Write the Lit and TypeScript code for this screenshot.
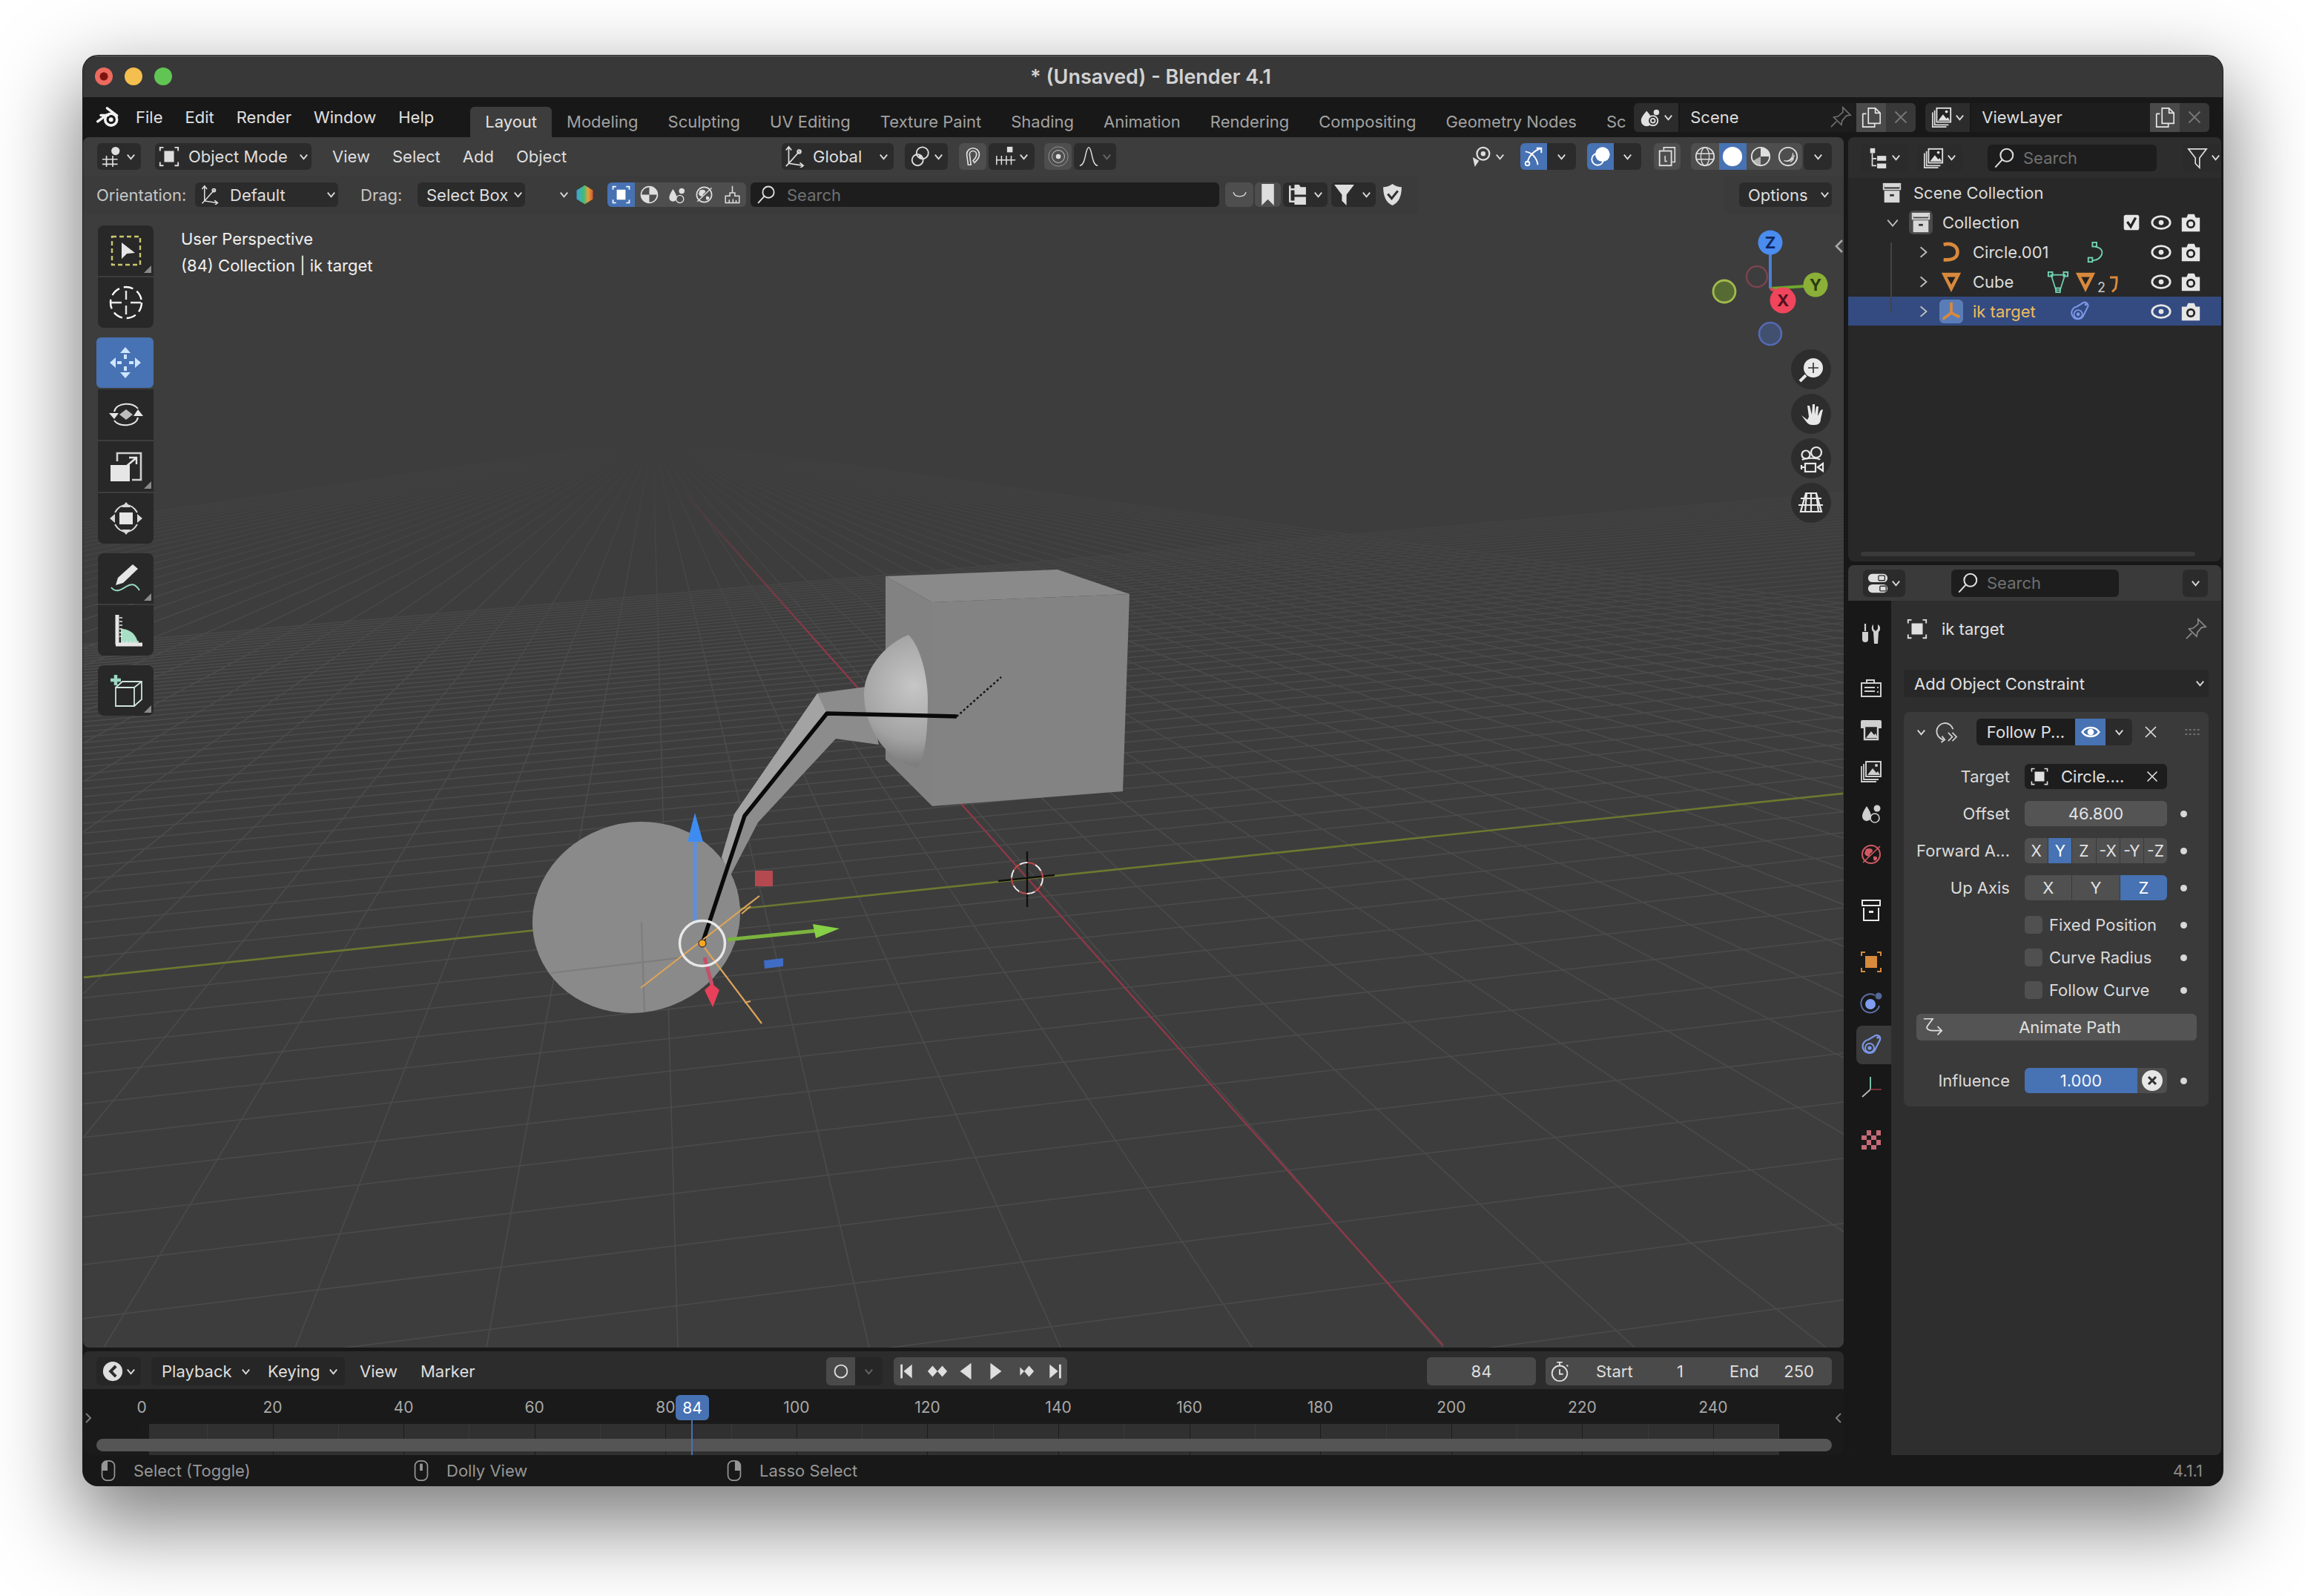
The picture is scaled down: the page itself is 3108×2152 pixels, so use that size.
import { LitElement, html, svg, css } from 'lit'
import { customElement } from 'lit/decorators.js'

const TEAL = '#72d3b4'
const ORANGE = '#d9893c'
const BLUE = '#7b97e6'

// blender style icons on a 32 unit box
const ICONS: Record<string, unknown> = {
  logo: svg`<circle cx="19.5" cy="19" r="7.5" stroke-width="3.4"/><circle cx="19.5" cy="19" r="2.8" fill="currentColor" stroke="none"/><path stroke-width="3.2" stroke-linecap="round" d="M2.5 21.5 14 13M6.5 13.5H16M14.5 4.5 27 14"/>`,
  ed3d: svg`<path stroke-width="1.8" d="M1 20h22M1 27h22M7 15v16M16 15v16"/><circle cx="20" cy="8" r="6" fill="currentColor" stroke="none"/>`,
  obj: svg`<rect x="9" y="8" width="14" height="16" fill="currentColor" stroke="none"/><path d="M3 8V3h5M24 3h5v5M29 24v5h-5M8 29H3v-5"/>`,
  orient: svg`<path stroke-width="1.8" d="M8 3v23l20 3M8 26 24 8M4 7l4-5 4 5M24 25l5 4-5 4M8 26l-4 4"/><circle cx="23" cy="9" r="2.5"/>`,
  pivot: svg`<circle cx="19" cy="11" r="8.5"/><circle cx="12" cy="21" r="8"/><circle cx="16" cy="16" r="2.4" fill="currentColor" stroke="none"/>`,
  magnet: svg`<path stroke-width="1.8" d="M9 28 7 13a9 9 0 1 1 18 0c0 6-4 9-7 12l-2-3c3-3 5-5 5-9a5 5 0 1 0-10 0l2 15z"/>`,
  snapinc: svg`<rect x="18" y="2" width="8" height="8" fill="currentColor" stroke="none"/><path stroke-width="1.6" d="M2 21h28M3 15v13M10 15v13M17 15v13M24 15v13"/>`,
  prop: svg`<circle cx="16" cy="16" r="14" stroke-width="1" opacity=".5"/><circle cx="16" cy="16" r="9" stroke-width="1.2" opacity=".7"/><circle cx="16" cy="16" r="3.5" fill="currentColor" stroke="none"/>`,
  falloff: svg`<path stroke-width="1.6" d="M3 29C12 29 11 3 16 3s4 26 13 26"/>`,
  viz: svg`<circle cx="18" cy="12" r="9" stroke-width="2.4"/><circle cx="18" cy="12" r="3.4" fill="currentColor" stroke="none"/><path d="m3 17 9 5-6 9z" fill="currentColor" stroke="none"/>`,
  gizmo: svg`<path stroke-width="2" d="M7 25C9 14 16 8 27 4M20 4h7v7M4 9c8 1 16 7 18 19"/><circle cx="7" cy="26" r="3"/>`,
  overlay: svg`<circle cx="19" cy="13" r="10.5" fill="currentColor" stroke="none"/><circle cx="12" cy="20" r="8.5" stroke-width="2"/>`,
  xray: svg`<path stroke-width="1.8" d="M11 7V3h16v21h-4"/><rect x="5" y="8" width="17" height="21" stroke-width="2"/><path stroke-width="1.6" d="M13 15v8h3"/>`,
  wire: svg`<circle cx="16" cy="16" r="13"/><ellipse cx="16" cy="16" rx="6" ry="13" stroke-width="1.4"/><path stroke-width="1.4" d="M3 12h26M3 20h26"/>`,
  sphere: svg`<circle cx="16" cy="16" r="14" fill="currentColor" stroke="none"/>`,
  mat: svg`<circle cx="16" cy="16" r="13"/><path d="M16 3a13 13 0 0 1 13 13H16z" fill="currentColor" stroke="none"/><path d="M16 16v13A13 13 0 0 1 5 22z" fill="currentColor" opacity=".7" stroke="none"/>`,
  shade: svg`<circle cx="16" cy="16" r="13"/><path stroke-width="1.4" d="M10 22c7 2 13-3 13-11M14 23c5 0 10-4 11-9M19 24c2-1 4-3 5-5"/>`,
  search: svg`<circle cx="19" cy="12" r="9" stroke-width="2.2"/><path stroke-width="2.2" d="m12.5 18.5-10 11"/>`,
  drop: svg`<path d="M11 7c4 5 8 9 8 14a8 8 0 0 1-16 0c0-5 4-9 8-14z" fill="currentColor" stroke="none"/><circle cx="25" cy="9" r="4" fill="currentColor" stroke="none"/><circle cx="20" cy="21" r="7" fill="#2b2b2b"/><circle cx="20" cy="21" r="3"/>`,
  hex: svg`<defs><linearGradient id="hexg" x1="0" x2="1" y1="0" y2="0"><stop offset="0" stop-color="#3ba6d8"/><stop offset=".45" stop-color="#44bb78"/><stop offset=".7" stop-color="#e2a23c"/><stop offset="1" stop-color="#d8582f"/></linearGradient></defs><polygon points="16,1 29,9 29,23 16,31 3,23 3,9" fill="url(#hexg)" stroke="none"/>`,
  halfdisc: svg`<circle cx="16" cy="16" r="13"/><path d="M16 3a13 13 0 0 1 13 13H16zM16 16v13A13 13 0 0 1 3 16z" fill="currentColor" stroke="none"/>`,
  drops: svg`<path d="M10 7c3 5 6 9 6 14a6 6 0 0 1-12 0c0-5 3-9 6-14z" fill="currentColor" stroke="none"/><circle cx="24" cy="10" r="4.5" fill="currentColor" stroke="none"/><circle cx="21" cy="23" r="6" stroke-width="1.6"/>`,
  world: svg`<circle cx="16" cy="16" r="12"/><path d="M9 9c4-2 9-1 9 2s-4 3-4 6-5 2-7-2zM19 19c3-1 6 0 5 3s-4 3-5 1z" fill="currentColor" stroke="none"/><path stroke-width="1.6" d="M5 27 28 5"/>`,
  brush: svg`<path stroke-width="1.8" d="M16 2v11M12 13h8v5h7v11H5V18h7zM11 29v-5M17 29v-6M22 29v-4"/>`,
  smile: svg`<path stroke-width="1.6" d="M6 12c2 9 18 9 20 0"/>`,
  bookmark: svg`<path d="M8 2h16v28l-8-8-8 8z" fill="currentColor" stroke="none"/>`,
  hier: svg`<path stroke-width="2.4" d="M8 4v22M8 9h7M8 25h7"/><path d="M14 3h6l2 3h7v10H14zM14 19h15v10H14z" fill="currentColor" stroke="none"/>`,
  funnel: svg`<path d="M3 3h26L19 16v14l-6-6v-8z" fill="currentColor" stroke="none"/>`,
  funnelo: svg`<path stroke-width="1.8" d="M3 3h26L19 16v14l-6-6v-8z"/>`,
  shield: svg`<path d="M16 2c4 3 8 4 12 4 0 11-3 20-12 24C7 26 4 17 4 6c4 0 8-1 12-4z" fill="currentColor" stroke="none"/><path stroke="#2e2e2e" stroke-width="3" d="m10 15 5 6 8-10"/>`,
  tree: svg`<rect x="5" y="2" width="7" height="7" fill="currentColor" stroke="none"/><path stroke-width="1.8" d="M8 9v18h6M8 17h6"/><rect x="15" y="13" width="13" height="7" fill="currentColor" stroke="none"/><rect x="15" y="24" width="13" height="7" fill="currentColor" stroke="none"/>`,
  toggle: svg`<rect x="2" y="3" width="28" height="12" rx="6" fill="currentColor" stroke="none"/><rect x="17" y="5.5" width="9" height="7" rx="1" fill="none" stroke="#2b2b2b" stroke-width="1.4"/><rect x="2" y="18" width="28" height="12" rx="6" fill="currentColor" stroke="none"/><rect x="19" y="20.5" width="9" height="7" rx="1" fill="none" stroke="#2b2b2b" stroke-width="1.4"/>`,
  layers: svg`<path stroke-width="1.8" d="M3 9v21h20M6 6v21h20"/><rect x="9" y="3" width="20" height="20" stroke-width="2" fill="#222"/><path d="m11 21 7-9 5 6 2-2 3 5z" fill="currentColor" stroke="none"/><circle cx="23" cy="8" r="2" fill="currentColor" stroke="none"/>`,
  copy: svg`<path stroke-width="1.8" d="M4 11h5M4 11v19h17v-5M12 3h10l7 7v15H12zM22 3v7h7"/>`,
  close: svg`<path d="m8 8 16 16M24 8 8 24"/>`,
  pin: svg`<path stroke-width="1.8" d="m19 2 11 11-6 1-6 7-1 6-11-11 6-1 7-6zM10 22l-8 8"/>`,
  coll: svg`<rect x="4" y="3" width="24" height="8" stroke-width="2"/><rect x="5" y="3" width="22" height="5" fill="currentColor" stroke="none"/><path d="M5 13h22v17H5z" fill="currentColor" stroke="none"/><rect x="13" y="18" width="6" height="3" fill="#333" stroke="none"/>`,
  collo: svg`<path stroke-width="2" d="M4 3h24v7H4zM6 13v17h20V13"/><rect x="13" y="17" width="6" height="3" fill="currentColor" stroke="none"/>`,
  check: svg`<rect x="5" y="5" width="22" height="22" rx="3" fill="currentColor" stroke="none"/><path stroke="#222" stroke-width="3.5" d="m10 15 5 7 7-13"/>`,
  eye: svg`<ellipse cx="16" cy="16" rx="13" ry="9" stroke-width="3"/><circle cx="16" cy="16" r="3.6" fill="currentColor" stroke="none"/>`,
  blink: svg`<path stroke-width="2.8" d="M3 16c6-9 20-9 26 0-6 9-20 9-26 0z"/><circle cx="16" cy="16" r="5" fill="currentColor" stroke="none"/>`,
  cam: svg`<path d="M3 9h7l2-5h9l2 5h6v20H3z" fill="currentColor" stroke="none"/><circle cx="16" cy="18" r="6.5" fill="#222" stroke="none"/><circle cx="16" cy="18" r="3.6" fill="currentColor" stroke="none"/>`,
  curve: svg`<path stroke-width="5" d="M5 5c13-3 20 3 20 11S18 28 5 27"/>`,
  curvedata: svg`<rect x="10" y="2" width="6" height="6"/><rect x="4" y="24" width="6" height="6"/><path stroke-width="2" d="M14 8c10 2 12 8 8 14s-8 5-12 6"/>`,
  meshtri: svg`<path stroke-width="1.8" d="M6 6h20L19 28h-6z"/><rect x="2" y="2" width="6" height="6"/><rect x="24" y="2" width="6" height="6"/><rect x="13" y="25" width="6" height="6"/>`,
  meshobj: svg`<path d="M2 3h28L16 31z" fill="currentColor" stroke="none"/><path d="M10 9h12l-6 11z" fill="#222" stroke="none"/>`,
  hook: svg`<path stroke-width="4" d="M8 4h12v8l-2 12-6 6"/>`,
  empty: svg`<path stroke-width="4" d="M16 3v15L4 27M16 18l12 6"/>`,
  wrench: svg`<path stroke-width="2.2" d="M8 2v10"/><path d="M4 13h8v10a4 4 0 0 1-8 0z" fill="currentColor" stroke="none"/><path d="M19 3v6l3 3 3-3V3c4 2 4 8 1 10l-1 16h-5l-1-16c-3-2-3-8 0-10z" fill="currentColor" stroke="none"/>`,
  rcam: svg`<path stroke-width="2" d="M3 9h26v18H3zM10 9V5h10v4"/><path stroke-width="1.8" d="M7 15h14M7 20h14M25 14v2M25 20v2"/>`,
  print: svg`<path d="M4 3h24a2 2 0 0 1 2 2v9H2V5a2 2 0 0 1 2-2z" fill="currentColor" stroke="none"/><path stroke-width="2.4" d="M7 11h18v18H7z" fill="#222"/><path d="m9 27 7-9 4 5 2-2 3 6z" fill="currentColor" stroke="none"/>`,
  objo: svg`<rect x="8" y="8" width="16" height="16" fill="currentColor" stroke="none"/><path stroke-width="2" d="M3 8V3h5M24 3h5v5M29 24v5h-5M8 29H3v-5"/>`,
  phys: svg`<path stroke-width="2" opacity=".65" d="M21 5a12.5 12.5 0 1 0 6 14"/><circle cx="15" cy="17" r="7" fill="currentColor" stroke="none"/><circle cx="26" cy="6" r="4.5" fill="currentColor" opacity=".6" stroke="none"/>`,
  constr: svg`<path stroke-width="2.2" d="M22 3c4-1 7 2 6 6l-7 14a9 9 0 1 1-9-14z"/><circle cx="25" cy="6" r="1.8" fill="currentColor" stroke="none"/><circle cx="14" cy="20" r="6" stroke-width="2"/><circle cx="14" cy="20" r="2.6" fill="currentColor" stroke="none"/>`,
  follow: svg`<path stroke-width="2" d="M11 27A12 12 0 1 1 25 12"/><path stroke-width="2" d="m9 22 4 5-5 4"/><path stroke-width="1.8" d="m18 17 6 6-6 6M24 17l6 6-6 6"/>`,
  path: svg`<path stroke-width="1.8" d="M3 4h13l-8 11c-2 4 4 6 8 6h12M23 15l6 6-6 6"/>`,
  clock: svg`<circle cx="16" cy="19" r="11"/><path stroke-width="2" d="M12 3h8M16 3v5M16 13v7h5M26 7l2 2"/>`,
  record: svg`<circle cx="16" cy="16" r="9" stroke-width="2"/>`,
  first: svg`<path d="M6 6v20" stroke-width="3"/><path d="M21 6v20L9 16z" fill="currentColor" stroke="none"/>`,
  prevk: svg`<path d="m9 8 7 8-7 8-7-8zM23 8l7 8-7 8-7-8z" fill="currentColor" stroke="none"/>`,
  rev: svg`<path d="M23 4v24L7 16z" fill="currentColor" stroke="none"/>`,
  play: svg`<path d="M9 4v24l16-12z" fill="currentColor" stroke="none"/>`,
  nextk: svg`<path d="m10 10 6 6-6 6zM23 8l7 8-7 8-7-8z" fill="currentColor" stroke="none"/>`,
  last: svg`<path d="M26 6v20" stroke-width="3"/><path d="M11 6v20l12-10z" fill="currentColor" stroke="none"/>`,
  timeline: svg`<circle cx="16" cy="16" r="14" fill="currentColor" stroke="none"/><path fill="#2c2c2c" stroke="none" d="m19 7-9 9 9 9 3-3-6-6 6-6z"/>`,
  mouse: svg`<rect x="7" y="2" width="18" height="28" rx="7" stroke-width="1.8"/><path d="M15 2a8 8 0 0 0-8 8v6h8z" fill="currentColor" stroke="none"/>`,
  mousem: svg`<rect x="7" y="2" width="18" height="28" rx="7" stroke-width="1.8"/><rect x="14" y="6" width="4" height="10" fill="currentColor" stroke="none"/>`,
  mouser: svg`<rect x="7" y="2" width="18" height="28" rx="7" stroke-width="1.8"/><path d="M17 2a8 8 0 0 1 8 8v6h-8z" fill="currentColor" stroke="none"/>`,
  texture: svg`<rect x="3" y="3" width="26" height="26" fill="currentColor" stroke="none"/><path fill="#1a1a1a" stroke="none" d="M3 3h7v7H3zM16 3h7v7h-7zM10 10h6v6h-6zM23 10h6v6h-6zM3 16h7v7H3zM16 16h7v7h-7zM10 23h6v6h-6zM23 23h6v6h-6z"/>`,
  axes: svg`<path stroke="#7fd3b4" stroke-width="1.8" d="M15 3v17"/><path stroke="#8a2f3a" stroke-width="1.8" d="M15 20h15"/><path stroke="#bbb" stroke-width="1.8" d="M15 20 4 30"/>`,
}

// larger tool shelf icons on a 48 unit box
const TOOLS: Record<string, unknown> = {
  select: svg`<rect x="5" y="5" width="38" height="38" stroke="#c9c66f" stroke-width="2.4" stroke-dasharray="6 4"/><path d="M18 13v22l7-7 11-1z" fill="#e6e6e6" stroke="none"/>`,
  cursor: svg`<circle cx="24" cy="24" r="21" stroke="#fff" stroke-width="2.4" stroke-dasharray="13 6"/><path stroke="#e6e6e6" stroke-width="2.4" d="M4 24h14M30 24h14M24 8v12M24 28v12"/>`,
  move: svg`<g fill="#cde6ff" stroke="none"><path d="M24 3l7 8H17zM24 45l-7-8h14zM3 24l8-7v14zM45 24l-8 7V17z"/><rect x="22" y="13" width="4" height="6"/><rect x="22" y="29" width="4" height="6"/><rect x="13" y="22" width="6" height="4"/><rect x="29" y="22" width="6" height="4"/></g>`,
  rotate: svg`<path stroke="#e6e6e6" stroke-width="2" d="M8 20C11 7 34 7 40 16M40 28C37 41 14 41 8 32"/><path fill="#e6e6e6" stroke="none" d="m1 22 13 0-6 8zM47 26H34l6-9z"/><path fill="#bdbdbd" stroke="none" d="m24 17 9 7-9 7-9-7z"/>`,
  scale: svg`<path stroke="#cfcfcf" stroke-width="2.6" d="M12 17V6h32v36H32"/><rect x="3" y="22" width="26" height="22" fill="#e6e6e6" stroke="none"/><path stroke="#e6e6e6" stroke-width="2.4" d="m24 24 13-11M28 12h10v9"/>`,
  transform: svg`<path stroke="#d8d8d8" stroke-width="2" d="M9 16C13 9 19 6 24 6M39 16C35 9 29 6 24 6M9 32c4 7 10 10 15 10M39 32c-4 7-10 10-15 10"/><rect x="15" y="16" width="18" height="16" fill="#e6e6e6" stroke="none"/><path fill="#d8d8d8" stroke="none" d="M24 2l6 7H18zM24 46l-6-7h12zM2 24l7-6v12zM46 24l-7 6V18z"/>`,
  annotate: svg`<path fill="#e6e6e6" stroke="none" d="m33 5 7 6-20 19-10 3 3-10z"/><path stroke="#9ad7c4" stroke-width="2" d="M4 36c6 8 14 3 20-1s12-5 18 5"/>`,
  measure: svg`<path d="M17 22a22 22 0 0 1 23 20H17z" fill="#a7e0c6" stroke="none"/><path stroke="#e6e6e6" stroke-width="5" d="M12 3v40M10 43h36"/><path stroke="#e6e6e6" stroke-width="1.4" d="M15 7h4M15 12h4M15 17h4M15 22h4M15 27h4M15 32h4M20 38v5M25 38v5M30 38v5M35 38v5M40 38v5"/>`,
  add: svg`<path stroke="#9ad7c4" stroke-width="4.5" d="M10 3v14M3 10h14"/><path stroke="#cfe3dc" stroke-width="1.8" d="M10 20h25v25H10zM10 20l9-8h26v24l-10 9M35 20l10-8"/>`,
}

const icon = (name: string, cls = '') =>
  html`<svg class="ic ${cls}" viewBox="0 0 32 32" fill="none" stroke="currentColor" stroke-width="2">${ICONS[name]}</svg>`

const caret = (dim = false) =>
  html`<svg class="caret ${dim ? 'dim' : ''}" viewBox="0 0 16 16" fill="none" stroke="currentColor" stroke-width="2"><path d="m3 5 5 6 5-6"/></svg>`

const dot = () => html`<span class="dotc"><i class="dot"></i></span>`

// --- viewport ground plane ---
const VX = { x: 880, y: 590 }
const VY = { x: 25000, y: -1285 }
const ORIGIN = { x: 1385, y: 1184 }
const V_LEFT = 112
const V_RIGHT = 2486

function gridLines() {
  const out: { x1: number; y1: number; x2: number; y2: number }[] = []
  for (let k = -36; k <= 30; k++) {
    out.push({ x1: VX.x, y1: VX.y, x2: 1946 + 258 * k, y2: 1817 })
  }
  const a = 0.04
  for (let u = -15; u <= 50; u++) {
    const t = a * u
    const px = (t * VX.x + ORIGIN.x) / (t + 1)
    const py = (t * VX.y + ORIGIN.y) / (t + 1)
    const slope = (VY.y - py) / (VY.x - px)
    out.push({ x1: V_LEFT, y1: py + (V_LEFT - px) * slope, x2: V_RIGHT, y2: py + (V_RIGHT - px) * slope })
  }
  return out
}

const scene = () => svg`
  <defs>
    <linearGradient id="gridFade" gradientUnits="userSpaceOnUse" x1="0" x2="0" y1="590" y2="900">
      <stop offset="0" stop-color="#3d3d3d"/><stop offset="1" stop-color="#4b4b4b"/>
    </linearGradient>
    <linearGradient id="redFade" gradientUnits="userSpaceOnUse" x1="0" x2="0" y1="650" y2="860">
      <stop offset="0" stop-color="#3d3d3d"/><stop offset="1" stop-color="#8c3848"/>
    </linearGradient>
    <radialGradient id="dome" gradientUnits="userSpaceOnUse" cx="1232" cy="925" r="105">
      <stop offset="0" stop-color="#c6c6c6"/><stop offset=".7" stop-color="#a2a2a2"/><stop offset="1" stop-color="#7e7e7e"/>
    </radialGradient>
  </defs>
  ${gridLines().map(l => svg`<line x1=${l.x1} y1=${l.y1} x2=${l.x2} y2=${l.y2} stroke="url(#gridFade)" stroke-width="1.5"/>`)}
  <line x1="922" y1="664" x2="1946" y2="1814" stroke="url(#redFade)" stroke-width="2.4"/>
  <line x1="113" y1="1318" x2="2485" y2="1070" stroke="#6e7a2c" stroke-width="2.4"/>

  <polygon points="1194,777 1257,812 1257,1087 1194,1024" fill="#828282"/>
  <polygon points="1194,777 1426,768 1523,801 1257,812" fill="#8a8a8a"/>
  <polygon points="1257,812 1523,801 1514,1067 1257,1087" fill="#838383"/>

  <polygon points="973,1156 990,1098 1102,935 1168,926 1185,1004 1127,996 1022,1109 984,1182" fill="#8c8c8c"/>
  <polygon points="973,1156 990,1098 1102,935 1115,962 1004,1100 982,1176" fill="#a3a3a3"/>
  <path d="M1225 856C1190 870 1165 905 1165 935c0 50 35 95 72 100 11-15 14-50 14-91 0-34-11-74-26-88z" fill="url(#dome)"/>

  <ellipse cx="858" cy="1237" rx="141" ry="128" transform="rotate(-16 858 1237)" fill="#8a8a8a"/>
  <path d="M865 1243 869 1364M743 1312 921 1291" stroke="#7c7c7c" stroke-width="2" fill="none"/>

  <path d="M947 1272 1004 1100 1115 962 1290 966" stroke="#0a0a0a" stroke-width="5.5" fill="none" stroke-linejoin="round"/>
  <path d="M1290 966 1350 913" stroke="#111" stroke-width="2.4" stroke-dasharray="3 3" fill="none"/>

  <path d="M864 1332 1024 1208M1012 1222 1000 1232M950 1278 1027 1380M1004 1352 1012 1350" stroke="#dba35a" stroke-width="2.2" fill="none"/>
  <path d="M937 1243V1130" stroke="#5d8fe0" stroke-width="5" fill="none"/>
  <polygon points="937,1096 948,1135 927,1135" fill="#3f8cf0"/>
  <path d="M981 1267 1100 1255" stroke="#7ab33e" stroke-width="5" fill="none"/>
  <polygon points="1132,1252 1096,1246 1100,1265" fill="#86d045"/>
  <path d="M950 1291 960 1328" stroke="#c5506a" stroke-width="5" fill="none"/>
  <polygon points="961,1358 950,1335 960,1326 970,1335" fill="#e8405a"/>
  <rect x="1018" y="1174" width="24" height="21" fill="#b44a50"/>
  <polygon points="1030,1295 1056,1292 1056,1303 1031,1306" fill="#3f6cc4"/>
  <circle cx="947" cy="1272" r="30.5" fill="none" stroke="#e8e8e8" stroke-width="3.4"/>
  <circle cx="947" cy="1272" r="5" fill="#f5a623" stroke="#111" stroke-width="1"/>

  <path d="M1346 1188 1422 1180M1385 1148 1385 1223" stroke="#111" stroke-width="2.4" fill="none"/>
  <circle cx="1385" cy="1184" r="21" fill="none" stroke="#eee" stroke-width="2" stroke-dasharray="11 11"/>
  <circle cx="1385" cy="1184" r="21" fill="none" stroke="#c24a4a" stroke-width="2" stroke-dasharray="11 11" stroke-dashoffset="11"/>

  <path d="M2387 389V343" stroke="#4c7fd6" stroke-width="4"/>
  <path d="M2387 389 2432 386" stroke="#6ea62e" stroke-width="4"/>
  <path d="M2387 389 2398 395" stroke="#e0455a" stroke-width="4"/>
  <circle cx="2369" cy="373" r="14" fill="none" stroke="#7a4350" stroke-width="2.6"/>
  <circle cx="2325" cy="393" r="15" fill="#566b34" stroke="#a4bb4a" stroke-width="2.8"/>
  <circle cx="2387" cy="450" r="15" fill="#41506e" stroke="#5569b5" stroke-width="2.6"/>
  <circle cx="2387" cy="327" r="16.5" fill="#4a8cf0"/>
  <circle cx="2448" cy="384" r="16.5" fill="#8ab038"/>
  <circle cx="2404" cy="405" r="17.5" fill="#f0455c"/>
  <g class="axis">
    <text x="2387" y="335" fill="#10295e">Z</text>
    <text x="2448" y="392" fill="#2a3a0c">Y</text>
    <text x="2404" y="413" fill="#52101c">X</text>
  </g>
  <path d="m2484 324-8 8 8 8" stroke="#a8a8a8" stroke-width="2.6" fill="none"/>

  <g fill="#2d2d2d"><circle cx="2442" cy="498" r="27"/><circle cx="2442" cy="558" r="27"/><circle cx="2442" cy="618" r="27"/><circle cx="2442" cy="678" r="27"/></g>
  <circle cx="2445" cy="496" r="13" fill="#e8e8e8"/>
  <path d="M2435 506 2427 514" stroke="#e8e8e8" stroke-width="4"/>
  <path d="M2445 489v14M2438 496h14" stroke="#2d2d2d" stroke-width="1.6"/>
  <path d="M2429 560l6 8c2 3 5 5 9 5h3c5 0 8-3 8-8l3-13-3 1-4 8 1-13h-3l-2 11v-14h-3l-1 14-3-12h-3l2 15-2 4z" fill="#e8e8e8"/>
  <g fill="none" stroke="#e8e8e8" stroke-width="2.2">
    <circle cx="2435" cy="613" r="5.5"/><circle cx="2449" cy="610" r="7"/>
    <path d="M2430 620c4-3 22-3 24 0"/>
    <rect x="2434" y="625" width="14" height="11"/><path d="M2434 630h-5M2429 627v6M2458 625v10l-7-5z"/>
  </g>
  <path d="M2435 665h14l7 25h-28zM2428 672h28M2425 681h33M2442 665v25M2436 665l-2 25M2449 665l3 25" fill="none" stroke="#e8e8e8" stroke-width="2.2"/>
`

const TAB_ICONS: { icon: string; color: string; gap?: string; active?: boolean }[] = [
  { icon: 'wrench', color: '#cfcfcf' },
  { icon: 'rcam', color: '#cfcfcf', gap: 'g1' },
  { icon: 'print', color: '#cfcfcf' },
  { icon: 'layers', color: '#cfcfcf' },
  { icon: 'drops', color: '#cfcfcf' },
  { icon: 'world', color: '#cf5a62' },
  { icon: 'collo', color: '#e8e8e8', gap: 'g2' },
  { icon: 'objo', color: ORANGE, gap: 'g3' },
  { icon: 'phys', color: '#7f9cf0' },
  { icon: 'constr', color: BLUE, active: true },
  { icon: 'axes', color: '#cfcfcf' },
  { icon: 'texture', color: '#c66a78', gap: 'g4' },
]

type Row = { name: string; icon: string; color: string; indent: number; chev?: string; nameW?: number; boxed?: string; sel?: boolean; check?: boolean; extras?: unknown; cam?: boolean }

const ROWS: Row[] = [
  { name: 'Scene Collection', icon: 'coll', color: '#d8d8d8', indent: 43, cam: false },
  { name: 'Collection', icon: 'coll', color: '#d8d8d8', indent: 38, chev: 'down', boxed: 'box', check: true, cam: true },
  { name: 'Circle.001', icon: 'curve', color: ORANGE, indent: 79, chev: 'right', nameW: 152, cam: true,
    extras: html`<span class="tint" style="color:${TEAL}">${icon('curvedata')}</span>` },
  { name: 'Cube', icon: 'meshobj', color: ORANGE, indent: 79, chev: 'right', nameW: 100, cam: true,
    extras: html`<span class="tint mr6" style="color:${TEAL}">${icon('meshtri')}</span><span class="tint" style="color:${ORANGE}">${icon('meshobj')}</span><span class="sub">2</span><span class="tint hook" style="color:${ORANGE}">${icon('hook')}</span>` },
  { name: 'ik target', icon: 'empty', color: ORANGE, indent: 79, chev: 'right', nameW: 129, boxed: 'box act', sel: true, cam: true,
    extras: html`<span class="tint" style="color:${BLUE}">${icon('constr')}</span>` },
]

const RULER = [0, 20, 40, 60, 80, 100, 120, 140, 160, 180, 200, 220, 240]
const frameX = (f: number) => 79 + f * 8.829

@customElement('app-root')
export class AppRoot extends LitElement {
  static styles = css`
    :host {
      display: block;
      width: 3108px;
      height: 2152px;
      box-sizing: border-box;
      padding: 75px 111px 149px 112px;
      background: #fff;
      font-family: Inter, "Noto Sans", sans-serif;
      font-size: 22px;
      color: #e0e0e0;
      overflow: hidden;
    }
    * { box-sizing: border-box; }
    i { display: block; }

    .window {
      width: 2885px;
      height: 1928px;
      display: flex;
      flex-direction: column;
      background: #181818;
      border-radius: 20px;
      overflow: hidden;
      box-shadow: 0 0 0 1px #1c1c1c, 0 44px 110px 10px rgba(0, 0, 0, .5);
    }

    /* title bar */
    .titlebar {
      height: 56px;
      flex: none;
      position: relative;
      display: flex;
      align-items: center;
      justify-content: center;
      background: #383838;
      border-top: 1px solid #6a6a6a;
      padding-right: 6px;
      font-size: 27px;
      font-weight: 600;
      color: #d2d2d2;
    }
    .lights {
      position: absolute;
      left: 16px;
      top: 15px;
      display: flex;
      gap: 16px;
    }
    .lights i { width: 24px; height: 24px; border-radius: 50%; }
    .lights .r { background: radial-gradient(circle, #7c1510 0 5px, #ee6a5e 6px); }
    .lights .y { background: #f5bf4f; }
    .lights .g { background: #61c554; }

    /* top bar */
    .topbar {
      height: 54px;
      flex: none;
      display: flex;
      align-items: center;
      padding-left: 17px;
      background: #181818;
      font-size: 22px;
    }
    .topbar .logo { color: #f0f0f0; margin-right: 20px; }
    .topbar .logo .ic { width: 34px; height: 34px; }
    .menus { display: flex; gap: 30px; }
    .tabs {
      width: 1558px;
      height: 41px;
      margin-left: 49px;
      align-self: flex-end;
      display: flex;
      overflow: hidden;
      flex: none;
    }
    .tab {
      padding: 0 20px 2px;
      flex: none;
      display: flex;
      align-items: center;
      color: #a2a2a2;
      border-radius: 6px 6px 0 0;
      white-space: nowrap;
    }
    .tab:last-child { padding-right: 0; }
    .tab.on { background: #3d3d3d; color: #e2e2e2; }
    .idpick {
      height: 39px;
      flex: none;
      display: flex;
      align-items: center;
      background: #2c2c2c;
      border-radius: 6px;
      overflow: hidden;
      color: #e0e0e0;
    }
    .idpick.scene { width: 380px; margin-left: 11px; }
    .idpick.vl { width: 383px; margin-left: 13px; }
    .idpick .drop { width: 62px; display: flex; align-items: center; justify-content: center; border-right: 2px solid #181818; height: 100%; flex: none; }
    .idpick .nm { flex: 1; height: 100%; padding-left: 14px; display: flex; align-items: center; justify-content: space-between; background: #1d1d1d; color: #dedede; }
    .idpick .nm .pin { color: #6e6e6e; margin-right: 6px; }
    .idpick .ab { width: 40px; height: 100%; flex: none; display: flex; align-items: center; justify-content: center; background: #4a4a4a; color: #e6e6e6; }
    .idpick .ab.x { background: #383838; color: #777; }

    /* work area */
    .work {
      flex: 1;
      min-height: 0;
      display: grid;
      grid-template-columns: 2374px 503px;
      column-gap: 6px;
    }
    .left, .right { display: flex; flex-direction: column; gap: 5px; min-height: 0; min-width: 0; }

    /* viewport */
    .viewport {
      height: 1632px;
      flex: none;
      position: relative;
      background: #3d3d3d;
      border-radius: 8px;
      overflow: hidden;
    }
    .viewport .scene { position: absolute; inset: 0; width: 100%; height: 100%; }
    .scene .axis text { font: 700 22px Inter, sans-serif; text-anchor: middle; }
    .vhead {
      position: relative;
      height: 52px;
      display: grid;
      grid-template-columns: 923px 924px auto;
      align-items: center;
      padding-left: 19px;
    }
    .cluster { display: flex; align-items: center; height: 36px; }
    .ctl {
      height: 100%;
      display: flex;
      align-items: center;
      justify-content: center;
      flex: none;
      background: #2b2b2b;
      color: #dedede;
      border-radius: 6px;
      white-space: nowrap;
    }
    .ctl.tog { background: #4e4e4e; }
    .ctl.on { background: #4772b3; color: #fff; }
    .ctl.bare { background: transparent; }
    .ctl.ln { border-radius: 6px 0 0 6px; }
    .ctl.rn { border-radius: 0 6px 6px 0; }
    .ctl.mn { border-radius: 0; }
    .ic { width: 30px; height: 30px; display: block; flex: none; }
    .ic + .caret { margin-left: 2px; }
    .caret { width: 15px; height: 15px; display: block; flex: none; color: #dcdcdc; }
    .caret.dim { color: #666; }
    .textm { color: #dedede; }
    .mvw { display: flex; gap: 30px; margin-left: 28px; }
    .w59 { width: 59px; } .w57 { width: 57px; } .w58 { width: 58px; } .w62 { width: 62px; }
    .w37 { width: 37px; } .w39 { width: 39px; } .w38 { width: 38px; } .w36 { width: 36px; }
    .ml15 { margin-left: 15px; } .ml19 { margin-left: 19px; } .ml3 { margin-left: 3px; } .ml13 { margin-left: 13px; } .ml17 { margin-left: 17px; } .ml14 { margin-left: 14px; } .ml2 { margin-left: 2px; }
    .om { width: 211px; justify-content: flex-start; padding-left: 4px; }
    .om .lb { flex: 1; margin-left: 11px; }
    .om .caret { margin-right: 3px; }
    .global { width: 151px; justify-content: flex-start; padding-left: 2px; }
    .global .lb { flex: 1; margin-left: 10px; }
    .global .caret { margin-right: 6px; }
    .shade .ctl { width: 37.5px; }

    .tools {
      position: relative;
      height: 52px;
      display: flex;
      justify-content: space-between;
    }
    .tleft {
      width: 1800px;
      height: 52px;
      padding: 9px 0 10px 18px;
      background: #3b3b3b;
      display: grid;
      grid-template-columns: 133px 193px 30px 77px 145px 37px 30px 32px 12px 187px 6px 632px 8px 38px 2px 35px 3px 60px 5px 60px 5px 35px;
      align-items: center;
      border-radius: 0 0 6px 0;
    }
    .tright {
      width: 161px;
      height: 52px;
      padding: 9px 16px 10px 20px;
      background: #3b3b3b;
      border-radius: 0 0 0 6px;
    }
    .tleft .ctl, .tright .ctl { height: 33px; }
    .tleft .ic { width: 27px; height: 27px; }
    .tleft .tall .ic { width: 33px; height: 33px; }
    .tleft .tall .ic + .caret { margin: 0 4px 0 6px; }
    .lbl { color: #c6c6c6; white-space: nowrap; }
    .def { justify-content: flex-start; padding-left: 6px; }
    .def .lb { flex: 1; margin-left: 14px; text-align: left; }
    .def .caret { margin-right: 2px; }
    .sbx { justify-content: flex-start; padding-left: 12px; }
    .sbx .lb { flex: 1; }
    .sbx .caret { margin-right: 2px; }
    .modes { display: grid; grid-template-columns: repeat(5, 1fr); height: 33px; }
    .modes .ctl { width: auto; }
    .field {
      height: 100%;
      display: flex;
      align-items: center;
      background: #1d1d1d;
      color: #707070;
      border-radius: 6px;
      padding-left: 8px;
    }
    .field .ic { margin-right: 10px; color: #dedede; }
    .tleft .field .ic { margin-right: 14px; }
    .opt { width: 100%; justify-content: space-between; padding: 0 2px 0 12px; background: #2b2b2b; }

    .shelf {
      position: absolute;
      left: 20px;
      top: 119px;
      display: flex;
      flex-direction: column;
      gap: 13px;
    }
    .sgroup { display: flex; flex-direction: column; gap: 2px; }
    .tool {
      width: 75px;
      height: 68px;
      position: relative;
      display: flex;
      align-items: center;
      justify-content: center;
      background: #282828;
    }
    .sgroup .tool:first-child { border-radius: 8px 8px 0 0; }
    .sgroup .tool:last-child { border-radius: 0 0 8px 8px; }
    .sgroup .tool:only-child { border-radius: 8px; }
    .tool.on { background: #4772b3; width: 77px; margin-left: -2px; }
    .sgroup .tool.on:first-child { border-radius: 6px; }
    .tool svg { width: 48px; height: 48px; }
    .tool.more::after {
      content: '';
      position: absolute;
      right: 3px;
      bottom: 4px;
      border-left: 10px solid transparent;
      border-bottom: 10px solid #8a8a8a;
    }
    .hud {
      position: absolute;
      left: 132px;
      top: 119px;
      line-height: 36px;
      color: #f0f0f0;
    }

    /* timeline */
    .timeline {
      flex: 1;
      position: relative;
      display: flex;
      flex-direction: column;
      border-radius: 8px;
      overflow: hidden;
      background: #1a1a1a;
    }
    .thead {
      height: 51px;
      flex: none;
      padding: 8px 0 0 18px;
      display: grid;
      grid-template-columns: 984px 810px auto;
      background: #2c2c2c;
    }
    .thead .cluster { height: 38px; }
    .thead .ctl { background: #262626; }
    .thead .tog { background: #4a4a4a; }
    .thead .ic { width: 30px; height: 30px; margin: 0; }
    .w60 { width: 60px; }
    .pb { width: 143px; justify-content: space-between; padding: 0 8px 0 14px; }
    .ky { width: 118px; justify-content: space-between; padding: 0 8px 0 14px; }
    .tv { margin-left: 20px; display: flex; gap: 31px; }
    .frame { width: 147px; }
    .range { justify-content: space-between; }
    .w178 { width: 178px; padding: 0 30px 0 30px; }
    .w170 { width: 170px; padding: 0 24px 0 32px; }
    .ruler { height: 47px; flex: none; position: relative; }
    .rnum {
      position: absolute;
      top: 12px;
      transform: translateX(-50%);
      color: #a8a8a8;
      font-size: 21px;
    }
    .handle {
      position: absolute;
      left: 799px;
      top: 8px;
      width: 45px;
      height: 34px;
      display: flex;
      align-items: center;
      justify-content: center;
      background: #4772b3;
      border-radius: 6px;
      color: #fff;
      font-size: 21px;
    }
    .rarrow { position: absolute; top: 31px; width: 8px; height: 16px; color: #7a7a7a; }
    .rarrow.a { left: 3px; }
    .rarrow.b { right: 3px; }
    .track { flex: 1; position: relative; }
    .band { position: absolute; left: 89px; width: 2198px; top: 0; bottom: 0; background: #303030; }
    .tick { position: absolute; top: 0; bottom: 0; width: 1px; background: #1c1c1c; }
    .tick.minor { background: #3a3a3a; bottom: 20px; }
    .playline { position: absolute; left: 820px; top: -5px; bottom: 0; width: 2px; background: #4772b3; z-index: 2; }
    .sbar { position: absolute; left: 18px; right: 16px; top: 20px; height: 17px; background: #555; border-radius: 9px; }

    /* outliner */
    .outliner {
      height: 572px;
      flex: none;
      display: flex;
      flex-direction: column;
      position: relative;
      background: #282828;
      border-radius: 8px;
      overflow: hidden;
    }
    .ohead {
      height: 55px;
      flex: none;
      display: flex;
      align-items: center;
      padding-left: 17px;
      background: #2d2d2d;
    }
    .ohead .cluster { height: 36px; }
    .w63 { width: 63px; } .w61 { width: 61px; }
    .osearch { width: 228px; margin-left: 34px; background: #1d1d1d; flex: none; }
    .ofilter { margin-left: 34px; width: 70px; flex: none; justify-content: flex-start; padding-left: 6px; }
    .orow { height: 40px; display: flex; align-items: center; position: relative; color: #dcdcdc; }
    .orow.sel { background: #334b80; height: 39px; }
    .orow .chev { width: 44px; flex: none; display: flex; justify-content: center; color: #c0c0c0; }
    .orow .chev svg { width: 18px; height: 18px; }
    .orow .oi { width: 32px; height: 32px; flex: none; margin-right: 13px; display: flex; align-items: center; justify-content: center; border-radius: 6px; }
    .orow .oi .ic { width: 30px; height: 30px; }
    .oi.box { background: #4a4a4a; }
    .oi.act { background: #5a7db8; }
    .oname { white-space: nowrap; flex: none; }
    .orow.sel .oname { color: #f0bc5e; }
    .extras { display: flex; align-items: flex-end; flex: none; position: relative; }
    .tint .ic { width: 30px; height: 30px; }
    .mr6 { margin-right: 7px; }
    .sub { font-size: 18px; color: #c8c8c8; margin: 0 0 -3px 1px; }
    .hook .ic { width: 24px; height: 24px; }
    .ovis { position: absolute; right: 21px; top: 0; bottom: 0; display: flex; align-items: center; }
    .ovis span { width: 40px; display: flex; justify-content: center; color: #e6e6e6; }
    .ovis .ic { width: 30px; height: 30px; }
    .tline { position: absolute; left: 57px; top: 142px; height: 95px; width: 2px; background: #444; }
    .oscroll { margin: auto 35px 7px 17px; height: 6px; border-radius: 3px; background: #3a3a3a; }

    /* properties */
    .props {
      flex: 1;
      min-height: 0;
      display: flex;
      flex-direction: column;
      border-radius: 8px;
      overflow: hidden;
      background: #2e2e2e;
    }
    .phead {
      height: 48px;
      flex: none;
      display: flex;
      align-items: center;
      padding-left: 20px;
      background: #3a3a3a;
    }
    .phead .cluster { height: 37px; }
    .psearch { width: 226px; margin-left: 62px; flex: none; }
    .pdrop { width: 34px; margin-left: 86px; }
    .pbody { flex: 1; min-height: 0; display: flex; }
    .ptabs { width: 58px; flex: none; background: #181818; padding: 17px 0 0 3px; position: relative; }
    .ptab { height: 56px; display: flex; align-items: center; justify-content: center; }
    .ptab .ic { width: 32px; height: 32px; }
    .ptab.on { background: #3a3a3a; margin-left: 8px; padding-right: 8px; border-radius: 8px 0 0 8px; height: 52px; margin-top: 2px; margin-bottom: 2px; }
    .g1 { margin-top: 17px; }
    .g2 { margin-top: 19px; }
    .g3 { margin-top: 14px; }
    .g4 { margin-top: 16px; }
    .pmain { flex: 1; padding: 0 17px 0 17px; min-width: 0; }
    .pctx { height: 76px; display: flex; align-items: center; padding-left: 3px; }
    .pctx > .ic { width: 30px; height: 30px; margin-right: 18px; }
    .pctx .nm { flex: 1; }
    .pctx .pin { color: #8a8a8a; margin: 0 2px 0 0; }
    .addc {
      height: 37px;
      margin-top: 17px;
      width: 411px;
      display: flex;
      align-items: center;
      justify-content: space-between;
      padding: 0 4px 0 14px;
      background: #282828;
      border-radius: 4px;
    }
    .panel {
      margin-top: 20px;
      width: 411px;
      padding-bottom: 18px;
      background: #3a3a3a;
      border-radius: 8px;
    }
    .phd { height: 54px; display: flex; align-items: center; padding-left: 16px; }
    .phd .ic { width: 28px; height: 28px; }
    .phd .follow { margin-left: 12px; color: #d0d0d0; }
    .phd .follow .ic { width: 30px; height: 30px; }
    .fname { display: flex; height: 36px; margin-left: 25px; border-radius: 6px; overflow: hidden; flex: none; }
    .fname span { display: flex; align-items: center; justify-content: center; }
    .fname .t { width: 133px; background: #1d1d1d; }
    .fname .e { width: 41px; background: #4772b3; color: #fff; }
    .fname .c { width: 36px; background: #2b2b2b; }
    .phd .xx { margin-left: 11px; color: #dedede; }
    .grip { width: 22px; height: 12px; margin-left: 31px; background: radial-gradient(circle, #777 1.2px, transparent 1.6px) 0 0 / 5.5px 6px; }
    .prow {
      display: grid;
      grid-template-columns: 143px 192px 44px;
      column-gap: 20px;
      height: 34px;
      align-items: center;
      margin-top: 16px;
    }
    .prow > .dotc { margin-left: -20px; }
    .prow > .l { text-align: right; white-space: nowrap; color: #dadada; }
    .prow.chk { margin-top: 10px; column-gap: 0; grid-template-columns: 163px 192px 44px; }
    .prow.chk > .dotc { margin-left: 0; }
    .prow.chk.first { margin-top: 16px; }
    .tfield { height: 34px; display: flex; align-items: center; background: #1d1d1d; border-radius: 6px; padding: 0 7px 0 7px; }
    .tfield .nm { flex: 1; margin-left: 16px; }
    .tfield .ic { width: 26px; height: 26px; }
    .num { height: 34px; display: flex; align-items: center; justify-content: center; background: #545454; border-radius: 6px; color: #e2e2e2; }
    .seg { display: flex; height: 34px; gap: 1px; border-radius: 6px; overflow: hidden; }
    .seg span { flex: 1; display: flex; align-items: center; justify-content: center; background: #505050; color: #e2e2e2; }
    .seg span.on { background: #4772b3; color: #fff; }
    .seg.six span { font-size: 21px; }
    .chkrow { display: flex; align-items: center; color: #dadada; white-space: nowrap; }
    .chkb { width: 24px; height: 24px; margin-right: 9px; background: #505050; border-radius: 5px; flex: none; }
    .dotc { display: flex; justify-content: center; width: 44px; }
    .dot { width: 9px; height: 9px; border-radius: 50%; background: #d8d8d8; }
    .anim {
      width: 378px;
      height: 36px;
      margin: 15px 0 0 17px;
      padding-left: 36px;
      position: relative;
      display: flex;
      align-items: center;
      justify-content: center;
      background: #545454;
      border-radius: 6px;
    }
    .anim .ic { position: absolute; left: 7px; top: 3px; }
    .prow.infl { margin-top: 37px; }
    .slide { display: flex; height: 34px; border-radius: 6px; overflow: hidden; }
    .slide .b { flex: 1; display: flex; align-items: center; justify-content: center; background: #4772b3; color: #f0f4ff; }
    .slide .xb { width: 40px; display: flex; align-items: center; justify-content: center; background: #4e4e4e; }
    .xcirc { width: 28px; height: 28px; border-radius: 50%; background: #e6e6e6; color: #333; display: flex; align-items: center; justify-content: center; }
    .xcirc svg { width: 20px; height: 20px; }

    /* status bar */
    .status {
      height: 41px;
      flex: none;
      display: flex;
      align-items: center;
      padding: 0 27px 0 19px;
      color: #969696;
      font-size: 22px;
    }
    .sitem { width: 422px; display: flex; align-items: center; gap: 19px; }
    .sitem .ic { width: 30px; height: 30px; }
    .ver { margin-left: auto; color: #888; }
  `

  private renderViewport() {
    return html`
      <div class="viewport">
        <svg class="scene" viewBox="112 185 2374 1632" preserveAspectRatio="none">${scene()}</svg>
        <div class="vhead">
          <div class="cluster">
            <div class="ctl w59">${icon('ed3d')}${caret()}</div>
            <div class="ctl om ml19">${icon('obj')}<span class="lb">Object Mode</span>${caret()}</div>
            <div class="mvw textm"><span>View</span><span>Select</span><span>Add</span><span>Object</span></div>
          </div>
          <div class="cluster">
            <div class="ctl global">${icon('orient')}<span class="lb">Global</span>${caret()}</div>
            <div class="ctl w58 ml15">${icon('pivot')}${caret()}</div>
            <div class="ctl tog w37 ml15">${icon('magnet')}</div>
            <div class="ctl w62 ml3">${icon('snapinc')}${caret()}</div>
            <div class="ctl tog w37 ml13">${icon('prop')}</div>
            <div class="ctl w57 ml3">${icon('falloff')}${caret(true)}</div>
          </div>
          <div class="cluster">
            <div class="ctl bare w57">${icon('viz')}${caret()}</div>
            <div class="ctl on w36 ml15 ln">${icon('gizmo')}</div>
            <div class="ctl w39 rn">${caret()}</div>
            <div class="ctl on w36 ml15 ln">${icon('overlay')}</div>
            <div class="ctl w37 rn">${caret()}</div>
            <div class="ctl tog w36 ml17">${icon('xray')}</div>
            <div class="cluster shade ml14">
              <div class="ctl tog ln">${icon('wire')}</div>
              <div class="ctl on mn">${icon('sphere')}</div>
              <div class="ctl tog mn">${icon('mat')}</div>
              <div class="ctl tog rn">${icon('shade')}</div>
            </div>
            <div class="ctl w38 ml2">${caret()}</div>
          </div>
        </div>
        <div class="tools">
          <div class="tleft">
            <span class="lbl">Orientation:</span>
            <div class="ctl def">${icon('orient')}<span class="lb">Default</span>${caret()}</div>
            <i></i>
            <span class="lbl">Drag:</span>
            <div class="ctl sbx"><span class="lb">Select Box</span>${caret()}</div>
            <i></i>
            <div class="ctl bare">${caret()}</div>
            ${icon('hex')}
            <i></i>
            <div class="modes">
              <div class="ctl on ln">${icon('obj')}</div>
              <div class="ctl tog mn">${icon('halfdisc')}</div>
              <div class="ctl tog mn">${icon('drops')}</div>
              <div class="ctl tog mn">${icon('world')}</div>
              <div class="ctl tog rn">${icon('brush')}</div>
            </div>
            <i></i>
            <div class="field">${icon('search')}Search</div>
            <i></i>
            <div class="ctl tog">${icon('smile')}</div>
            <i></i>
            <div class="ctl tog tall">${icon('bookmark')}</div>
            <i></i>
            <div class="ctl tall">${icon('hier')}${caret()}</div>
            <i></i>
            <div class="ctl tall">${icon('funnel')}${caret()}</div>
            <i></i>
            <div class="ctl bare tall">${icon('shield')}</div>
          </div>
          <div class="tright"><div class="ctl opt"><span>Options</span>${caret()}</div></div>
        </div>
        <div class="shelf">
          <div class="sgroup">
            ${this.tool('select', true)}${this.tool('cursor')}
          </div>
          <div class="sgroup">
            ${this.tool('move', false, true)}${this.tool('rotate')}${this.tool('scale', true)}${this.tool('transform')}
          </div>
          <div class="sgroup">
            ${this.tool('annotate', true)}${this.tool('measure')}
          </div>
          <div class="sgroup">${this.tool('add', true)}</div>
        </div>
        <div class="hud">User Perspective<br />(84) Collection | ik target</div>
      </div>
    `
  }

  private tool(name: string, more = false, on = false) {
    return html`<div class="tool ${more ? 'more' : ''} ${on ? 'on' : ''}"><svg viewBox="0 0 48 48" fill="none">${TOOLS[name]}</svg></div>`
  }

  private renderTimeline() {
    const ticks: number[] = []
    for (let f = 0; f <= 250; f += 10) ticks.push(f)
    return html`
      <div class="timeline">
        <div class="thead">
          <div class="cluster">
            <div class="ctl w60">${icon('timeline')}${caret()}</div>
            <div class="ctl pb ml14 ln"><span>Playback</span>${caret()}</div>
            <div class="ctl ky rn"><span>Keying</span>${caret()}</div>
            <div class="tv textm"><span>View</span><span>Marker</span></div>
          </div>
          <div class="cluster">
            <div class="ctl tog w39 ln">${icon('record')}</div>
            <div class="ctl w37 rn">${caret(true)}</div>
            <div class="ctl tog w39 ml15 ln">${icon('first')}</div>
            <div class="ctl tog w39 mn">${icon('prevk')}</div>
            <div class="ctl tog w39 mn">${icon('rev')}</div>
            <div class="ctl tog w39 mn">${icon('play')}</div>
            <div class="ctl tog w39 mn">${icon('nextk')}</div>
            <div class="ctl tog w39 rn">${icon('last')}</div>
          </div>
          <div class="cluster">
            <div class="ctl tog frame">84</div>
            <div class="ctl tog w38 ml13 ln">${icon('clock')}</div>
            <div class="ctl tog range w178 mn"><span>Start</span><span>1</span></div>
            <div class="ctl tog range w170 rn"><span>End</span><span>250</span></div>
          </div>
        </div>
        <div class="ruler">
          ${RULER.map(f => html`<span class="rnum" style="left:${frameX(f)}px">${f}</span>`)}
          <div class="handle">84</div>
          <svg class="rarrow a" viewBox="0 0 8 16" fill="none" stroke="currentColor" stroke-width="2"><path d="m1 2 6 6-6 6"/></svg>
          <svg class="rarrow b" viewBox="0 0 8 16" fill="none" stroke="currentColor" stroke-width="2"><path d="M7 2 1 8l6 6"/></svg>
        </div>
        <div class="track">
          <div class="band"></div>
          ${ticks.map(f => html`<i class="tick ${f % 20 ? 'minor' : ''}" style="left:${frameX(f)}px"></i>`)}
          <div class="sbar"></div>
          <i class="playline"></i>
        </div>
      </div>
    `
  }

  private renderOutliner() {
    return html`
      <div class="outliner">
        <div class="ohead">
          <div class="cluster">
            <div class="ctl w63">${icon('tree')}${caret()}</div>
            <div class="ctl w61 ml13">${icon('layers')}${caret()}</div>
            <div class="field osearch">${icon('search')}Search</div>
            <div class="ctl ofilter">${icon('funnelo')}${caret()}</div>
          </div>
        </div>
        ${ROWS.map(r => html`
          <div class="orow ${r.sel ? 'sel' : ''}" style="padding-left:${r.indent}px">
            ${r.chev
              ? html`<span class="chev"><svg viewBox="0 0 16 16" fill="none" stroke="currentColor" stroke-width="1.6"><path d=${r.chev === 'down' ? 'm2 5 6 7 6-7' : 'm5 2 7 6-7 6'} /></svg></span>`
              : ''}
            <span class="oi ${r.boxed ?? ''}" style="color:${r.color}">${icon(r.icon)}</span>
            <span class="oname" style=${r.nameW ? `width:${r.nameW}px` : ''}>${r.name}</span>
            ${r.extras ? html`<span class="extras">${r.extras}</span>` : ''}
            ${r.cam
              ? html`<span class="ovis">
                  ${r.check ? html`<span>${icon('check')}</span>` : ''}
                  <span>${icon('eye')}</span><span>${icon('cam')}</span>
                </span>`
              : ''}
          </div>
        `)}
        <i class="tline"></i>
        <div class="oscroll"></div>
      </div>
    `
  }

  private renderProps() {
    return html`
      <div class="props">
        <div class="phead">
          <div class="cluster">
            <div class="ctl w57">${icon('toggle')}${caret()}</div>
            <div class="field psearch">${icon('search')}Search</div>
            <div class="ctl pdrop">${caret()}</div>
          </div>
        </div>
        <div class="pbody">
          <div class="ptabs">
            ${TAB_ICONS.map(t => html`<div class="ptab ${t.gap ?? ''} ${t.active ? 'on' : ''}" style="color:${t.color}">${icon(t.icon)}</div>`)}
          </div>
          <div class="pmain">
            <div class="pctx">${icon('objo')}<span class="nm">ik target</span><span class="pin">${icon('pin')}</span></div>
            <div class="addc"><span>Add Object Constraint</span>${caret()}</div>
            <div class="panel">
              <div class="phd">
                ${caret()}
                <span class="follow">${icon('follow')}</span>
                <div class="fname">
                  <span class="t">Follow P...</span>
                  <span class="e">${icon('blink')}</span>
                  <span class="c">${caret()}</span>
                </div>
                <span class="xx">${icon('close')}</span>
                <i class="grip"></i>
              </div>
              <div class="prow"><span class="l">Target</span>
                <div class="tfield">${icon('objo')}<span class="nm">Circle....</span>${icon('close')}</div>
              </div>
              <div class="prow"><span class="l">Offset</span><div class="num">46.800</div>${dot()}</div>
              <div class="prow"><span class="l">Forward A...</span>
                <div class="seg six"><span>X</span><span class="on">Y</span><span>Z</span><span>-X</span><span>-Y</span><span>-Z</span></div>${dot()}
              </div>
              <div class="prow"><span class="l">Up Axis</span>
                <div class="seg"><span>X</span><span>Y</span><span class="on">Z</span></div>${dot()}
              </div>
              <div class="prow chk first"><i></i><div class="chkrow"><i class="chkb"></i>Fixed Position</div>${dot()}</div>
              <div class="prow chk"><i></i><div class="chkrow"><i class="chkb"></i>Curve Radius</div>${dot()}</div>
              <div class="prow chk"><i></i><div class="chkrow"><i class="chkb"></i>Follow Curve</div>${dot()}</div>
              <div class="anim">${icon('path')}Animate Path</div>
              <div class="prow infl"><span class="l">Influence</span>
                <div class="slide"><span class="b">1.000</span>
                  <span class="xb"><span class="xcirc"><svg viewBox="0 0 32 32" fill="none" stroke="currentColor" stroke-width="5"><path d="m8 8 16 16M24 8 8 24"/></svg></span></span>
                </div>${dot()}
              </div>
            </div>
          </div>
        </div>
      </div>
    `
  }

  render() {
    return html`
      <div class="window">
        <div class="titlebar">
          <div class="lights"><i class="r"></i><i class="y"></i><i class="g"></i></div>
          * (Unsaved) - Blender 4.1
        </div>
        <div class="topbar">
          <span class="logo">${icon('logo')}</span>
          <div class="menus"><span>File</span><span>Edit</span><span>Render</span><span>Window</span><span>Help</span></div>
          <div class="tabs">
            <span class="tab on">Layout</span>
            ${['Modeling', 'Sculpting', 'UV Editing', 'Texture Paint', 'Shading', 'Animation', 'Rendering', 'Compositing', 'Geometry Nodes', 'Sc'].map(
              t => html`<span class="tab">${t}</span>`
            )}
          </div>
          <div class="idpick scene">
            <span class="drop">${icon('drop')}${caret()}</span>
            <span class="nm">Scene<span class="pin">${icon('pin')}</span></span>
            <span class="ab">${icon('copy')}</span>
            <span class="ab x">${icon('close')}</span>
          </div>
          <div class="idpick vl">
            <span class="drop">${icon('layers')}${caret()}</span>
            <span class="nm">ViewLayer</span>
            <span class="ab">${icon('copy')}</span>
            <span class="ab x">${icon('close')}</span>
          </div>
        </div>
        <div class="work">
          <div class="left">${this.renderViewport()}${this.renderTimeline()}</div>
          <div class="right">${this.renderOutliner()}${this.renderProps()}</div>
        </div>
        <div class="status">
          <div class="sitem">${icon('mouse')}Select (Toggle)</div>
          <div class="sitem">${icon('mousem')}Dolly View</div>
          <div class="sitem">${icon('mouser')}Lasso Select</div>
          <span class="ver">4.1.1</span>
        </div>
      </div>
    `
  }
}
